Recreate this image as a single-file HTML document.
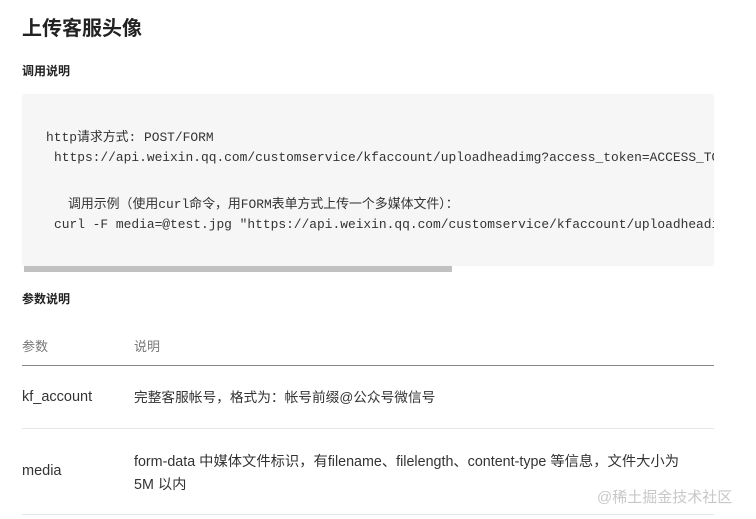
<!DOCTYPE html>
<html><head><meta charset="utf-8"><style>
body{margin:0;width:756px;height:519px;overflow:hidden;background:#fff;font-family:"Liberation Sans","Noto Sans CJK SC",sans-serif;color:#333;position:relative}
.a{position:absolute;white-space:nowrap}
h1{position:absolute;left:22px;top:12px;margin:0;font-size:20px;font-weight:bold;color:#222}
.h{font-size:12px;font-weight:bold;color:#222}
.code{position:absolute;left:22px;top:94px;width:692px;height:172px;background:#f6f6f6;border-radius:3px}
.m{font-family:"Liberation Mono","Noto Sans CJK SC",monospace;font-size:12.9px;color:#333;letter-spacing:0}
.sb{position:absolute;left:24px;top:266px;width:428px;height:6px;background:#c1c1c1}
.line{position:absolute;left:22px;width:692px;height:1px}
.t{font-size:14.5px;color:#333}
.th{font-size:13px;color:#777}
</style></head><body>
<h1>上传客服头像</h1>
<div class="a h" style="left:22px;top:62px">调用说明</div>
<div class="code"></div>
<div class="a m" style="left:46px;top:126px">http请求方式: POST/FORM</div>
<div class="a m" style="left:54px;top:150px;width:660px;overflow:hidden">https://api.weixin.qq.com/customservice/kfaccount/uploadheadimg?access_token=ACCESS_TOKEN</div>
<div class="a m" style="left:68px;top:193px">调用示例（使用curl命令，用FORM表单方式上传一个多媒体文件）：</div>
<div class="a m" style="left:54px;top:217px;width:660px;overflow:hidden">curl -F media=@test.jpg "https://api.weixin.qq.com/customservice/kfaccount/uploadheadimg</div>
<div class="sb"></div>
<div class="a h" style="left:22px;top:290px">参数说明</div>
<div class="a th" style="left:22px;top:336px">参数</div>
<div class="a th" style="left:134px;top:336px">说明</div>
<div class="line" style="top:365px;background:#888"></div>
<div class="a t" style="left:22px;top:389px">kf_account</div>
<div class="a" style="left:134px;top:386px;font-size:13.7px">完整客服帐号，格式为：帐号前缀@公众号微信号</div>
<div class="line" style="top:428px;background:#e6e6e6"></div>
<div class="a t" style="left:22px;top:463px">media</div>
<div class="a" style="left:134px;top:450px;font-size:14.3px">form-data 中媒体文件标识，有filename、filelength、content-type 等信息，文件大小为</div>
<div class="a" style="left:134px;top:473px;font-size:14.3px">5M 以内</div>
<div class="line" style="top:514px;background:#e6e6e6"></div>
<div class="a" style="left:597px;top:486px;font-size:15px;color:#c8c8c8">@稀土掘金技术社区</div>
</body></html>
